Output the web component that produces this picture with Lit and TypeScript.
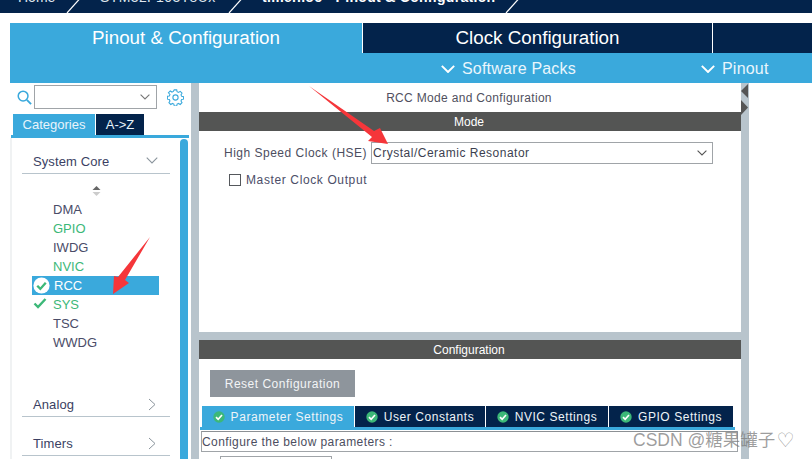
import { LitElement, html, css, svg } from "lit";
import { customElement } from "lit/decorators.js";

const check = (size: number, bg: string, fg: string) => html`<svg class="chk" width=${size} height=${size} viewBox="0 0 16 16"><circle cx="8" cy="8" r="7.6" fill=${bg}/><path d="M4 8.2l2.9 3L12 5.4" fill="none" stroke=${fg} stroke-width="2.2"/></svg>`;
const tabCheck = () => check(12, "#3cb878", "#fff");
const chev = (w: number, c: string, sw = 1) => html`<svg width=${w} height=${w * 0.6} viewBox="0 0 10 6"><path d="M.6.6L5 5l4.4-4.4" fill="none" stroke=${c} stroke-width=${sw}/></svg>`;
const right = () => html`<svg width="8" height="13" viewBox="0 0 8 13"><path d="M1 1l6 5.5L1 12" fill="none" stroke="#8a949c" stroke-width="1"/></svg>`;
const slash = () => html`<svg class="slash" width="14" height="13" viewBox="0 0 14 13"><path d="M13.5-1L1 13" stroke="#fff" stroke-width="1.2" fill="none"/></svg>`;

@customElement("app-root")
export class AppRoot extends LitElement {
  static styles = css`
    :host { display: block; width: 812px; height: 459px; overflow: hidden; position: relative; background: #fff; font-family: "Liberation Sans", Arial, sans-serif; color: #3c3f5a; }
    .crumbs { height: 13px; background: #03234b; color: #dfe6ee; font-size: 14px; display: flex; align-items: flex-end; overflow: hidden; line-height: 16px; }
    .crumbs span { position: relative; top: -8px; white-space: nowrap; flex: none; }
    .crumbs svg { flex: none; }
    .c1 { margin-left: 18px; width: 48px; }
    .c2 { margin-left: 20px; width: 128px; letter-spacing: .4px; }
    .c3 { margin-left: 20px; width: 243px; font-weight: bold; color: #fff; letter-spacing: .3px; }
    .tabs { margin: 10px 0 0 10px; display: flex; height: 30px; background: #3aa9dc; }
    .tab { display: flex; justify-content: center; align-items: center; color: #fff; font-size: 18.8px; background: #03234b; box-sizing: border-box; }
    .t1 { width: 353px; background: #3aa9dc; border-right: 1px solid #fff; }
    .t2 { width: 350px; border-right: 1px solid #fff; }
    .t3 { flex: 1; }
    .sub { margin-left: 10px; height: 30px; background: #3aa9dc; color: #eaf6fc; font-size: 16px; display: flex; align-items: center; letter-spacing: .2px; padding-top: 2px; box-sizing: border-box; }
    .sub span { display: flex; align-items: center; gap: 7px; position: absolute; }
    .s1 { left: 441px; } .s2 { left: 701px; }
    .body { margin-left: 10px; display: flex; height: 376px; }
    .left { width: 181px; flex: none; display: flex; flex-direction: column; position: relative; }
    .search { display: flex; align-items: center; height: 31px; padding: 2px 0 5px; box-sizing: border-box; flex: none; }
    .mag { margin: 0 2px 0 7px; flex: none; }
    .combo { width: 123px; height: 24px; border: 1px solid #a0a4a8; box-sizing: border-box; display: flex; align-items: center; justify-content: flex-end; padding-right: 6px; background: #fff; }
    .gear { margin-left: 10px; }
    .cats { display: flex; margin: 0 0 0 3px; height: 21px; font-size: 13px; color: #e8f4fb; gap: 1px; flex: none; }
    .cats div { display: flex; align-items: center; justify-content: center; padding-bottom: 1px; box-sizing: border-box; }
    .cat1 { width: 82px; background: #3aa9dc; }
    .cat2 { width: 48px; background: #03234b; }
    .catline { height: 3px; background: #3aa9dc; margin: 0 1px; width: 178px; flex: none; }
    .panel { flex: 1; display: flex; border-left: 2px solid #f0f2f3; min-height: 0; position: relative; }
    .tree { flex: 1; padding: 0 10px; min-width: 0; }
    .bar { width: 8px; margin-top: 1px; margin-right: 3px; background: #3aa9dc; border-radius: 4px 4px 0 0; }
    .head { height: 23px; margin-top: 13px; display: flex; justify-content: space-between; align-items: center; border-bottom: 1px solid #b8c4cc; font-size: 13px; letter-spacing: .1px; color: #3b3f63; padding: 0 12px 2px 11px; box-sizing: border-box; }
    .head.h2 { margin-top: 0; padding-right: 14px; }
    .spin { display: flex; flex-direction: column; align-items: center; height: 26px; padding-top: 12px; box-sizing: border-box; width: 148px; }
    .list { display: flex; flex-direction: column; margin-left: 10px; }
    .row { height: 19px; flex: none; display: flex; align-items: center; padding-left: 21px; font-size: 13px; color: #4a4c68; width: 127px; box-sizing: border-box; position: relative; }
    .row.g { color: #3cb878; }
    .row.sel { background: #3aa9dc; color: #fff; padding-left: 22px; }
    .row .chk { position: absolute; left: 1px; top: 1px; }
    .gap1 { height: 42px; }
    .gap2 { height: 16px; }
    .split { width: 8px; flex: none; background: #b8c4cc; }
    .center { width: 542px; flex: none; display: flex; flex-direction: column; }
    .top { height: 249px; flex: none; }
    .title { height: 29px; display: flex; align-items: center; justify-content: center; font-size: 12px; letter-spacing: .32px; color: #50505e; padding-right: 2px; box-sizing: border-box; }
    .dark { height: 19px; flex: none; background: #545554; color: #fff; font-size: 12px; display: flex; align-items: center; justify-content: center; padding-right: 2px; box-sizing: border-box; }
    .hse { display: flex; align-items: center; margin-top: 11px; height: 22px; font-size: 12px; letter-spacing: .5px; color: #4c4e60; padding-left: 25px; }
    .sel2 { margin-left: 4px; width: 342px; height: 22px; border: 1px solid #a0a4a8; box-sizing: border-box; display: flex; align-items: center; justify-content: space-between; padding: 0 5px 0 1px; color: #3c3f50; }
    .mco { display: flex; align-items: center; gap: 5px; margin: 5px 0 0 30px; height: 22px; font-size: 12px; letter-spacing: .62px; color: #4c4e68; }
    .box { width: 12px; height: 12px; border: 1px solid #55585c; box-sizing: border-box; }
    .band { height: 8px; flex: none; background: #b8c4cc; }
    .reset { margin: 11px 0 0 11px; width: 145px; height: 27px; flex: none; background: #8e959c; color: #f2f4f6; font-size: 12px; letter-spacing: .5px; display: flex; align-items: center; justify-content: center; }
    .ptabs { display: flex; margin: 9px 0 0 3px; height: 21px; flex: none; font-size: 12px; letter-spacing: .56px; color: #eef4f8; }
    .ptab { background: #03234b; display: flex; align-items: center; gap: 6px; justify-content: center; border-right: 1px solid #fff; box-sizing: border-box; }
    .ptab.on { background: #3aa9dc; width: 152px; border: 0; margin-right: 1px; }
    .p2 { width: 131px; } .p3 { width: 123px; } .p4 { width: 124px; border-right: 0; }
    .pline { height: 3px; flex: none; background: #3aa9dc; margin-left: 1px; width: 535px; }
    .cfg { margin: 1px 0 0 2px; height: 21px; width: 537px; border: 1px solid #a0a4a8; border-top-color: #8c9094; box-sizing: border-box; font-size: 12px; letter-spacing: .42px; color: #4c4e60; display: flex; align-items: center; flex: none; }
    .stub { margin: 4px 0 0 21px; width: 112px; height: 14px; border: 1px solid #a0a4a8; box-sizing: border-box; flex: none; }
    .rail { width: 8px; flex: none; background: #b8c4cc; position: relative; }
    .rail svg { position: absolute; left: 0; }
    .tri1 { top: 1px; } .tri2 { top: 17px; }
    .overlay { position: absolute; left: 0; top: 0; pointer-events: none; }
    .mark { position: absolute; left: 633px; top: 430px; font-size: 17.5px; line-height: 20px; color: rgba(120,120,120,.72); font-family: "Liberation Sans", "Noto Sans CJK SC", sans-serif; white-space: nowrap; display: flex; align-items: center; }
    .heart { font-size: 20px; font-family: "DejaVu Sans", sans-serif; margin-left: 1px; }
  `;

  render() {
    return html`
      <div class="crumbs">
        <span class="c1">Home</span>${slash()}
        <span class="c2">STM32F103T8Ux</span>${slash()}
        <span class="c3">timer.ioc - Pinout &amp; Configuration</span>${slash()}
      </div>
      <div class="tabs">
        <div class="tab t1">Pinout &amp; Configuration</div>
        <div class="tab t2">Clock Configuration</div>
        <div class="tab t3"></div>
      </div>
      <div class="sub">
        <span class="s1">${chev(14, "#fff", 1.4)}Software Packs</span>
        <span class="s2">${chev(14, "#fff", 1.4)}Pinout</span>
      </div>
      <div class="body">
        <div class="left">
          <div class="search">
            <svg class="mag" width="15" height="15" viewBox="0 0 16 16"><circle cx="6.5" cy="6.500" r="5.200" fill="none" stroke="#3aa9dc" stroke-width="1.600"/><path d="M10.500 10.500l4.500 4.500" stroke="#3aa9dc" stroke-width="2"/></svg>
            <div class="combo">${chev(10, "#777", 1.1)}</div>
            <svg class="gear" width="17" height="17" viewBox="0 0 17 17">
              <circle cx="8.5" cy="8.500" r="2.600" fill="none" stroke="#3aa9dc" stroke-width="1.100"/>
              <path d="M7.200.8h2.600l.4 2 1.500.7 1.800-1.100 1.900 1.900-1.100 1.800.7 1.500 2 .4v2.600l-2 .4-.7 1.500 1.100 1.800-1.900 1.900-1.800-1.100-1.500.7-.4 2H7.200l-.4-2-1.500-.7-1.800 1.100-1.900-1.900 1.100-1.800-.7-1.500-2-.4V7.600l2-.4.7-1.500L1.100 3.900 3 2l1.800 1.100 1.500-.7z" transform="translate(.4 .1) scale(.95)" fill="none" stroke="#3aa9dc" stroke-width="1.100"/>
            </svg>
          </div>
          <div class="cats"><div class="cat1">Categories</div><div class="cat2">A-&gt;Z</div></div>
          <div class="catline"></div>
          <div class="panel">
            <div class="tree">
              <div class="head"><span>System Core</span>${chev(12, "#8a949c", .9)}</div>
              <div class="spin">
                <svg width="9" height="10" viewBox="0 0 9 10"><path d="M4.500 0L8.500 4H.5z" fill="#666"/><path d="M.5 6h8L4.500 10z" fill="#ccc"/></svg>
              </div>
              <div class="list">
                <div class="row">DMA</div>
                <div class="row g">GPIO</div>
                <div class="row">IWDG</div>
                <div class="row g">NVIC</div>
                <div class="row sel">${check(17, "#fff", "#3cb878")}RCC</div>
                <div class="row g"><svg class="chk" width="14" height="14" viewBox="0 0 14 14"><path d="M1.500 7.500l3.500 3.500L12.500 3" fill="none" stroke="#3cb878" stroke-width="2.400"/></svg>SYS</div>
                <div class="row">TSC</div>
                <div class="row">WWDG</div>
              </div>
              <div class="gap1"></div>
              <div class="head h2"><span>Analog</span>${right()}</div>
              <div class="gap2"></div>
              <div class="head h2"><span>Timers</span>${right()}</div>
            </div>
            <div class="bar"></div>
          </div>
        </div>
        <div class="split"></div>
        <div class="center">
          <div class="top">
            <div class="title">RCC Mode and Configuration</div>
            <div class="dark">Mode</div>
            <div class="hse">High Speed Clock (HSE)
              <div class="sel2"><span>Crystal/Ceramic Resonator</span>${chev(10, "#555", 1.1)}</div>
            </div>
            <div class="mco"><div class="box"></div><span>Master Clock Output</span></div>
          </div>
          <div class="band"></div>
          <div class="dark">Configuration</div>
          <div class="reset">Reset Configuration</div>
          <div class="ptabs">
            <div class="ptab on">${tabCheck()}Parameter Settings</div>
            <div class="ptab p2">${tabCheck()}User Constants</div>
            <div class="ptab p3">${tabCheck()}NVIC Settings</div>
            <div class="ptab p4">${tabCheck()}GPIO Settings</div>
          </div>
          <div class="pline"></div>
          <div class="cfg">Configure the below parameters :</div>
          <div class="stub"></div>
        </div>
        <div class="rail">
          <svg class="tri1" width="8" height="14" viewBox="0 0 8 14"><path d="M7 0v14L0 7z" fill="#555"/></svg>
          <svg class="tri2" width="8" height="15" viewBox="0 0 8 15"><path d="M0 0v15l7-7.500z" fill="#555"/></svg>
        </div>
      </div>
      <svg class="overlay" width="812" height="459" viewBox="0 0 812 459">
        ${svg`<path d="M309 86L374 131 380 128 388 144 368 141 372 137z" fill="#f5363a"/>
        <path d="M150 237L125 280 129 283 113 294 114 276 118 277z" fill="#f5363a"/>`}
      </svg>
      <div class="mark"><span>CSDN @糖果罐子</span><span class="heart">♡</span></div>
    `;
  }
}
